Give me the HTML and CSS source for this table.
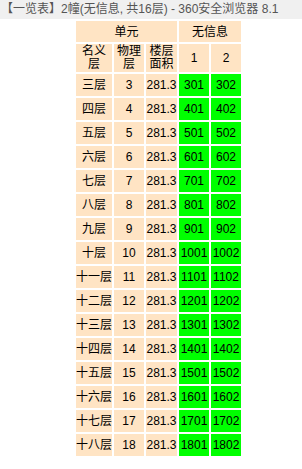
FILE: index.html
```html
<!DOCTYPE html>
<html lang="zh">
<head>
<meta charset="utf-8">
<title>一览表</title>
<link rel="stylesheet" href="styles.css">
</head>
<body>
<div class="titlebar">【一览表】2幢(无信息, 共16层) - 360安全浏览器 8.1</div>
<table class="grid">
<colgroup><col class="c1"><col class="c2"><col class="c3"><col class="c4"><col class="c5"></colgroup>
<tr class="h1"><td colspan="3">单元</td><td colspan="2">无信息</td></tr>
<tr class="h2"><td>名义<br>层</td><td>物理<br>层</td><td>楼层<br>面积</td><td>1</td><td>2</td></tr>
<tr><td>三层</td><td>3</td><td>281.3</td><td class="g">301</td><td class="g">302</td></tr>
<tr><td>四层</td><td>4</td><td>281.3</td><td class="g">401</td><td class="g">402</td></tr>
<tr><td>五层</td><td>5</td><td>281.3</td><td class="g">501</td><td class="g">502</td></tr>
<tr><td>六层</td><td>6</td><td>281.3</td><td class="g">601</td><td class="g">602</td></tr>
<tr><td>七层</td><td>7</td><td>281.3</td><td class="g">701</td><td class="g">702</td></tr>
<tr><td>八层</td><td>8</td><td>281.3</td><td class="g">801</td><td class="g">802</td></tr>
<tr><td>九层</td><td>9</td><td>281.3</td><td class="g">901</td><td class="g">902</td></tr>
<tr><td>十层</td><td>10</td><td>281.3</td><td class="g">1001</td><td class="g">1002</td></tr>
<tr><td>十一层</td><td>11</td><td>281.3</td><td class="g">1101</td><td class="g">1102</td></tr>
<tr><td>十二层</td><td>12</td><td>281.3</td><td class="g">1201</td><td class="g">1202</td></tr>
<tr><td>十三层</td><td>13</td><td>281.3</td><td class="g">1301</td><td class="g">1302</td></tr>
<tr><td>十四层</td><td>14</td><td>281.3</td><td class="g">1401</td><td class="g">1402</td></tr>
<tr><td>十五层</td><td>15</td><td>281.3</td><td class="g">1501</td><td class="g">1502</td></tr>
<tr><td>十六层</td><td>16</td><td>281.3</td><td class="g">1601</td><td class="g">1602</td></tr>
<tr><td>十七层</td><td>17</td><td>281.3</td><td class="g">1701</td><td class="g">1702</td></tr>
<tr><td>十八层</td><td>18</td><td>281.3</td><td class="g">1801</td><td class="g">1802</td></tr>
</table>
</body>
</html>
```
FILE: styles.css
```css
html, body {
  margin: 0;
  padding: 0;
  background: #ffffff;
}
body {
  font-family: "Liberation Sans", "Noto Sans CJK SC", sans-serif;
  font-size: 12px;
  color: #000;
}
.titlebar {
  height: 19px;
  line-height: 19px;
  background: #f0f0f0;
  color: #555555;
  padding-left: 1px;
  white-space: nowrap;
  overflow: hidden;
  font-family: "Liberation Sans", "Noto Sans CJK SC", sans-serif;
  font-size: 12px;
}
.grid {
  margin-left: 74px;
  border-collapse: separate;
  border-spacing: 2px;
  table-layout: fixed;
  width: 169px;
}
.c1 { width: 36px; }
.c2 { width: 30px; }
.c3 { width: 31px; }
.c4 { width: 30px; }
.c5 { width: 30px; }
.grid td {
  background: #ffe4c4;
  text-align: center;
  vertical-align: middle;
  padding: 0;
  height: 22px;
  line-height: 14px;
  white-space: nowrap;
  overflow: visible;
}
.grid tr.h1 td { height: 21px; }
.grid tr.h2 td { height: 28px; line-height: 13px; }
.grid td.g { background: #00ff00; }
```
